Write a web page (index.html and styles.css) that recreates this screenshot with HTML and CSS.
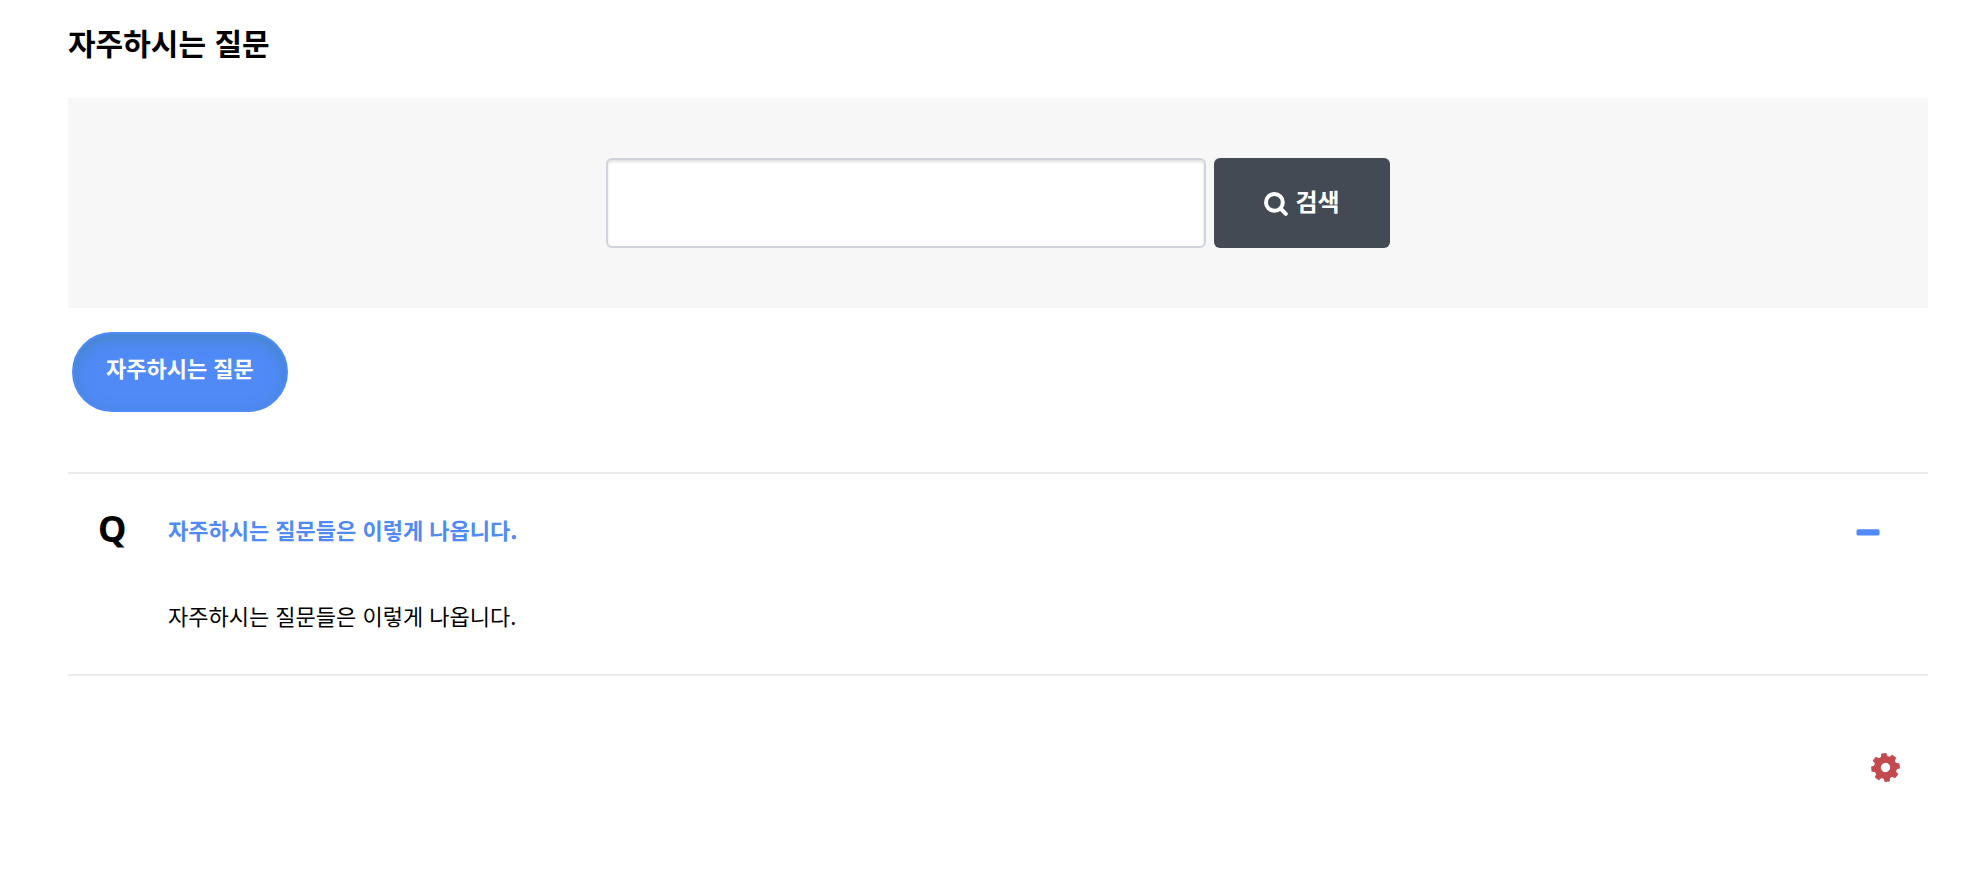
FILE: index.html
```
<!DOCTYPE html>
<html lang="ko">
<head>
<meta charset="utf-8">
<title>자주하시는 질문</title>
<link rel="stylesheet" href="styles.css">
</head>
<body>
<main class="faq">
  <h1 class="faq-title">자주하시는 질문</h1>

  <form class="search" role="search">
    <input class="search-input" type="text" name="stx" aria-label="검색어">
    <button class="search-button" type="submit">
      <svg class="search-icon" viewBox="0 -6 24 30" aria-hidden="true">
        <circle cx="10.4" cy="10.4" r="8.4"/>
        <path d="M17 17L21.800 21.800"/>
      </svg>
      <span>검색</span>
    </button>
  </form>

  <nav class="categories">
    <a class="category" href="#faq-list" aria-current="page">자주하시는 질문</a>
  </nav>

  <section class="faq-list" id="faq-list">
    <article class="item">
      <div class="item-head">
        <span class="item-mark">Q</span>
        <h2 class="item-question"><a href="#answer">자주하시는 질문들은 이렇게 나옵니다.</a></h2>
        <button class="item-toggle" type="button" aria-label="닫기" aria-expanded="true" aria-controls="answer">
          <svg class="minus-icon" viewBox="0 0 24 16" aria-hidden="true"><rect x="0.5" y="8.2" width="23" height="6.3" rx="1.5"/></svg>
        </button>
      </div>
      <p class="item-answer" id="answer">자주하시는 질문들은 이렇게 나옵니다.</p>
    </article>
  </section>

  <div class="admin">
    <a class="admin-link" href="#admin" aria-label="FAQ 수정">
      <svg class="cog-icon" viewBox="-15 -15 30 30" aria-hidden="true">
        <g transform="rotate(-7)">
          <circle class="cog-ring" r="8.3"/>
          <g id="teeth">
            <path d="M-3.600-10L-2.800-14.200Q-2.700-14.800-2-14.800H2Q2.700-14.800 2.800-14.200L3.600-10ZM-3.600 10L-2.800 14.200Q-2.700 14.800-2 14.800H2Q2.700 14.800 2.800 14.200L3.600 10Z"/>
          </g>
          <use href="#teeth" transform="rotate(45)"/>
          <use href="#teeth" transform="rotate(90)"/>
          <use href="#teeth" transform="rotate(135)"/>
        </g>
      </svg>
    </a>
  </div>
</main>
</body>
</html>
```
FILE: styles.css
```
* {
  box-sizing: border-box;
}

body {
  margin: 0;
  background: #fff;
  color: #000;
  font-family: "Noto Sans CJK KR", sans-serif;
  font-size: 22px;
  line-height: 40px;
}

.faq {
  padding: 22px 42px 24px 68px;
}

.faq-title {
  margin: 0 0 36px;
  font-size: 30px;
  line-height: 40px;
  font-weight: 700;
}

.search {
  display: flex;
  justify-content: center;
  gap: 8px;
  padding: 60px 24px;
  background: #f7f7f7;
}

.search-input {
  width: 600px;
  min-width: 0;
  height: 90px;
  padding: 0 20px;
  border: 2px solid #d0d3db;
  border-radius: 6px;
  background: #fff;
  box-shadow: inset 0 2px 3px rgba(0, 0, 0, 0.12);
  font: inherit;
}

.search-button {
  display: flex;
  flex: none;
  align-items: center;
  justify-content: center;
  gap: 7px;
  width: 176px;
  height: 90px;
  padding: 0 0 4px;
  border: 0;
  border-radius: 6px;
  background: #434a54;
  color: #fff;
  font: inherit;
  font-size: 24px;
  font-weight: 700;
  cursor: pointer;
}

.search-icon {
  width: 24px;
  height: 30px;
  fill: none;
  stroke: #fff;
  stroke-width: 4;
  stroke-linecap: round;
}

.categories {
  display: flex;
  padding: 24px 4px 60px;
}

.category {
  height: 80px;
  padding: 13px 32px;
  border: 2px solid #4f8af7;
  border-radius: 40px;
  background: #4f8af7;
  box-shadow: inset 0 5px 15px rgba(62, 130, 170, 0.6);
  color: #fff;
  font-weight: 700;
  text-decoration: none;
}

.faq-list {
  border-top: 2px solid #ebebeb;
}

.item {
  padding: 35px 48px 39px 30px;
  border-bottom: 2px solid #ebebeb;
}

.item-head {
  display: flex;
  align-items: center;
}

.item-mark {
  width: 70px;
  font-family: "Noto Sans", sans-serif;
  font-size: 36px;
  font-weight: 700;
}

.item-question {
  flex: 1;
  margin: 0;
  font-size: 22px;
  font-weight: 700;
}

.item-question a {
  color: #4f8af7;
  text-decoration: none;
}

.item-toggle {
  display: flex;
  padding: 0;
  border: 0;
  background: none;
  cursor: pointer;
}

.minus-icon {
  width: 24px;
  height: 16px;
  fill: #4f8af7;
}

.item-answer {
  margin: 46px 0 0 70px;
}

.admin {
  display: flex;
  justify-content: flex-end;
  padding: 77px 28px 0;
}

.admin-link {
  display: flex;
}

.cog-icon {
  width: 29px;
  height: 29px;
  overflow: visible;
  fill: #c34a4e;
}

.cog-icon .cog-ring {
  fill: none;
  stroke: #c34a4e;
  stroke-width: 7;
}
```
